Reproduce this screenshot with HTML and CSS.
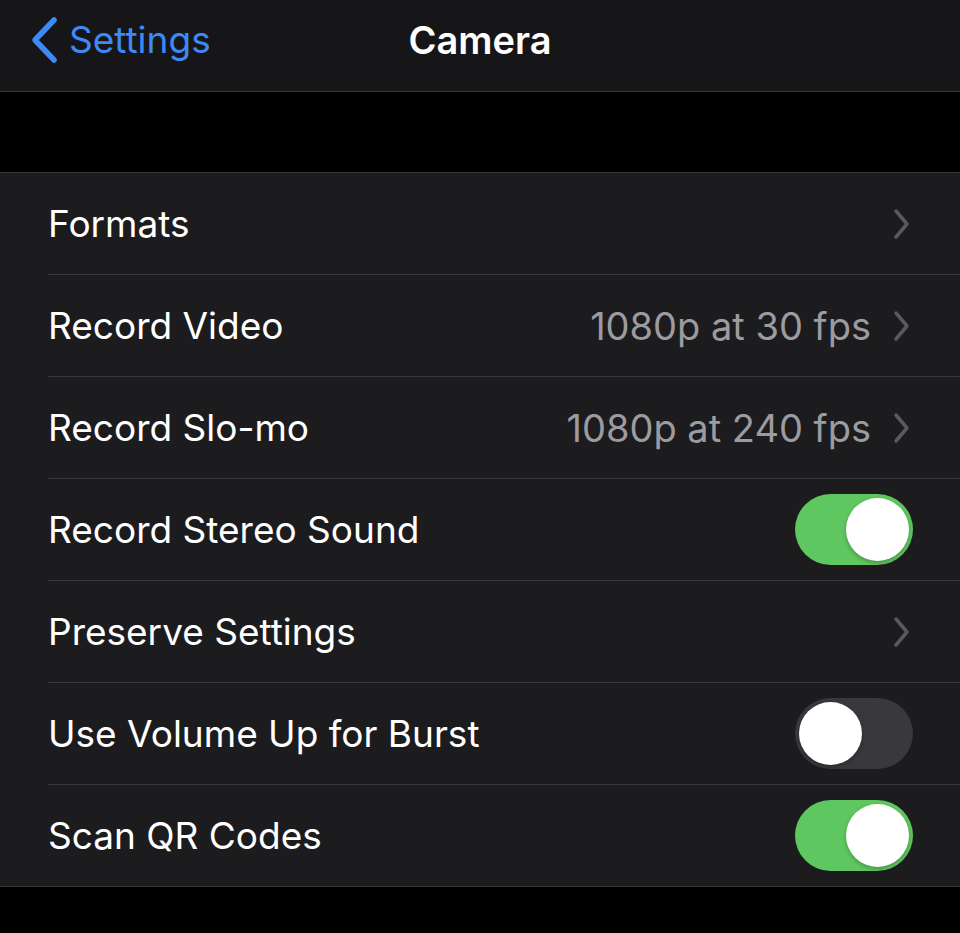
FILE: index.html
```html
<!DOCTYPE html>
<html>
<head>
<meta charset="utf-8">
<link rel="stylesheet" href="styles.css">
</head>
<body>
<div class="nav">
  <div class="back">
    <svg class="back-chev" width="30" height="48" viewBox="0 0 30 48"><path d="M25 4 L6 24 L25 44" fill="none" stroke="#3d8af7" stroke-width="5.5" stroke-linecap="round" stroke-linejoin="round"/></svg>
    <span class="back-label">Settings</span>
  </div>
  <div class="title">Camera</div>
</div>
<div class="gap"></div>
<div class="group">
  <div class="row"><span class="label">Formats</span><span class="right"><svg class="chev" width="18" height="32" viewBox="0 0 18 32"><path d="M3 3 L14 16 L3 29" fill="none" stroke="#5a5a5e" stroke-width="3.5" stroke-linecap="round" stroke-linejoin="round"/></svg></span></div>
  <div class="row"><span class="label">Record Video</span><span class="right"><span class="value">1080p at 30 fps</span><svg class="chev" width="18" height="32" viewBox="0 0 18 32"><path d="M3 3 L14 16 L3 29" fill="none" stroke="#5a5a5e" stroke-width="3.5" stroke-linecap="round" stroke-linejoin="round"/></svg></span></div>
  <div class="row"><span class="label">Record Slo-mo</span><span class="right"><span class="value">1080p at 240 fps</span><svg class="chev" width="18" height="32" viewBox="0 0 18 32"><path d="M3 3 L14 16 L3 29" fill="none" stroke="#5a5a5e" stroke-width="3.5" stroke-linecap="round" stroke-linejoin="round"/></svg></span></div>
  <div class="row"><span class="label">Record Stereo Sound</span><span class="right"><span class="toggle on"><span class="knob"></span></span></span></div>
  <div class="row"><span class="label">Preserve Settings</span><span class="right"><svg class="chev" width="18" height="32" viewBox="0 0 18 32"><path d="M3 3 L14 16 L3 29" fill="none" stroke="#5a5a5e" stroke-width="3.5" stroke-linecap="round" stroke-linejoin="round"/></svg></span></div>
  <div class="row"><span class="label">Use Volume Up for Burst</span><span class="right"><span class="toggle off"><span class="knob"></span></span></span></div>
  <div class="row last"><span class="label">Scan QR Codes</span><span class="right"><span class="toggle on"><span class="knob"></span></span></span></div>
</div>
</body>
</html>
```
FILE: styles.css
```css
html, body {
  margin: 0;
  padding: 0;
  background: #000;
  width: 960px;
  height: 933px;
  overflow: hidden;
  font-family: Inter, "Noto Sans", sans-serif;
  -webkit-font-smoothing: antialiased;
}
.nav {
  height: 91px;
  background: #161618;
  border-bottom: 1px solid #38383a;
  display: flex;
  align-items: flex-start;
  position: relative;
}
.back {
  display: flex;
  align-items: center;
  padding-left: 29px;
  padding-top: 16px;
  gap: 10px;
}
.back-label {
  color: #3d8af7;
  font-size: 37px;
  line-height: 48px;
}
.title {
  position: absolute;
  left: 0;
  right: 0;
  top: 16px;
  line-height: 48px;
  text-align: center;
  color: #fff;
  font-size: 38px;
  font-weight: 600;
  pointer-events: none;
}
.gap {
  height: 80px;
}
.group {
  background: #1c1c1e;
  border-top: 1px solid #38383a;
  border-bottom: 1px solid #38383a;
  padding-left: 48px;
}
.row {
  height: 101px;
  display: flex;
  align-items: center;
  justify-content: space-between;
  border-bottom: 1px solid #38383a;
  padding-right: 47px;
}
.row.last {
  border-bottom: none;
}
.label {
  color: #fff;
  font-size: 37px;
}
.right {
  display: flex;
  align-items: center;
}
.value {
  color: #9b9ba0;
  font-size: 38px;
  margin-right: 22px;
}
.chev {
  display: block;
  margin-right: 2px;
}
.toggle {
  width: 118px;
  height: 71px;
  border-radius: 36px;
  display: flex;
  align-items: center;
  padding: 0 4px;
  box-sizing: border-box;
}
.toggle.on {
  background: #5fc75f;
  justify-content: flex-end;
}
.toggle.off {
  background: #39393d;
  justify-content: flex-start;
}
.knob {
  width: 63px;
  height: 63px;
  border-radius: 50%;
  background: #fff;
  box-shadow: 0 2px 4px rgba(0,0,0,0.25);
}
```
